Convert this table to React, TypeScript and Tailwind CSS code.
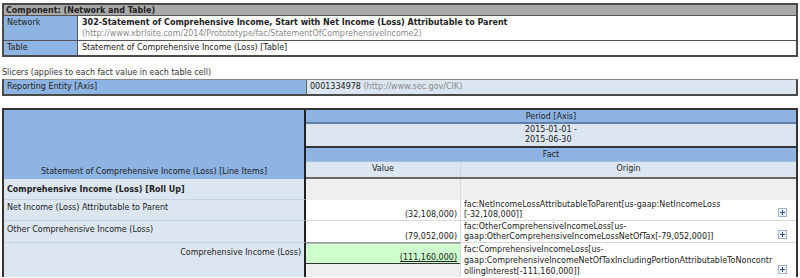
import React from "react";

function PlusBox() {
  return (
    <svg width="9" height="9" viewBox="0 0 9 9" className="shrink-0">
      <rect x="0.5" y="0.5" width="8" height="8" fill="#eef3fa" stroke="#9db3cf" />
      <path d="M2 4.5h5M4.5 2v5" stroke="#2b4f8c" strokeWidth="1" />
    </svg>
  );
}

function OriginCell({ lines, h, lh }: { lines: string[]; h: string; lh: string }) {
  return (
    <div className={`flex-1 min-w-0 flex justify-between items-end pl-[3px] pr-[9px] pb-[3px] ${h}`}>
      <div className={`self-start whitespace-nowrap ${lh}`}>
        {lines.map((l) => (
          <div key={l}>{l}</div>
        ))}
      </div>
      <PlusBox />
    </div>
  );
}

export default function App() {
  return (
    <div className="w-[800px] h-[278px] overflow-hidden bg-white text-[8px] leading-[11px] text-[#222] font-['DejaVu_Sans',sans-serif]">
      <div className="px-[2px] pt-[3px]">
        {/* Component: network and table */}
        <div className="border-2 border-[#4a4a4a]">
          <div className="h-[11px] bg-[#a9a9a9] font-bold px-[2px] leading-[11px] border-b border-[#555]">
            Component: (Network and Table)
          </div>
          <div className="flex h-[25px] border-b border-[#555]">
            <div className="w-[74px] shrink-0 bg-[#8db4e2] px-[3px] pt-[1px] border-r border-[#555]">Network</div>
            <div className="flex-1 px-[4px] pt-[1px]">
              <div className="font-bold">
                302-Statement of Comprehensive Income, Start with Net Income (Loss) Attributable to Parent
              </div>
              <div className="text-[#8a8a8a]">(http://www.xbrlsite.com/2014/Protototype/fac/StatementOfComprehensiveIncome2)</div>
            </div>
          </div>
          <div className="flex h-[14px]">
            <div className="w-[74px] shrink-0 bg-[#8db4e2] px-[3px] pt-[1px] border-r border-[#555]">Table</div>
            <div className="flex-1 px-[4px] pt-[1px]">Statement of Comprehensive Income (Loss) [Table]</div>
          </div>
        </div>

        {/* Slicers */}
        <div className="h-[22px] flex items-end pb-[1px] text-[#333]">Slicers (applies to each fact value in each table cell)</div>
        <div className="flex h-[17px] border-2 border-t border-[#4a4a4a] border-t-[#888]">
          <div className="w-[303px] shrink-0 bg-[#8db4e2] px-[3px] pt-[1px] border-r border-[#666]">Reporting Entity [Axis]</div>
          <div className="flex-1 bg-[#dce6f1] px-[3px] pt-[1px]">
            0001334978 <span className="text-[#8a8a8a]">(http://www.sec.gov/CIK)</span>
          </div>
        </div>

        {/* Fact table */}
        <div className="mt-[12px] border-2 border-[#333] border-b-0">
          <div className="flex h-[69px]">
            <div className="w-[302px] shrink-0 bg-[#8db4e2] border-r-2 border-[#222] flex items-end justify-center pb-[2px]">
              Statement of Comprehensive Income (Loss) [Line Items]
            </div>
            <div className="flex-1 flex flex-col">
              <div className="h-[14px] bg-[#8db4e2] text-center pt-[1px] border-b-2 border-[#5f7fa8]">Period [Axis]</div>
              <div className="h-[24px] bg-[#dce6f1] flex justify-center pt-[1px] leading-[10px] border-b-2 border-[#333]">
                <div>
                  <div>2015-01-01 -</div>
                  <div>2015-06-30</div>
                </div>
              </div>
              <div className="h-[14px] bg-[#8db4e2] text-center pt-[1px] border-b border-[#a8bedb]">Fact</div>
              <div className="flex-1 flex bg-[#dce6f1] border-b-2 border-[#666]">
                <div className="w-[155px] shrink-0 text-center pt-[1px] border-r border-[#c9d5e4]">Value</div>
                <div className="flex-1 text-center pt-[1px]">Origin</div>
              </div>
            </div>
          </div>

          {/* Roll up */}
          <div className="flex h-[21px]">
            <div className="w-[302px] shrink-0 bg-[#dce6f1] border-r-2 border-[#222] border-b border-b-[#c5d3e6] font-bold px-[3px] pt-[5px]">
              Comprehensive Income (Loss) [Roll Up]
            </div>
            <div className="w-[155px] shrink-0 bg-[#efefef] border-r border-[#dadada]" />
            <div className="flex-1 bg-[#efefef]" />
          </div>

          {/* Net income */}
          <div className="flex h-[21px]">
            <div className="w-[302px] shrink-0 bg-[#dce6f1] border-r-2 border-[#222] border-b border-b-[#c5d3e6] px-[3px] pt-[2px]">
              Net Income (Loss) Attributable to Parent
            </div>
            <div className="w-[155px] shrink-0 border-r border-[#dadada] border-b border-b-[#dadada] flex items-end justify-end pr-[3px] leading-[10px]">
              (32,108,000)
            </div>
            <div className="flex-1 min-w-0 flex border-b border-[#dadada]">
              <OriginCell
                h="h-[20px]"
                lh="leading-[10px]"
                lines={["fac:NetIncomeLossAttributableToParent[us-gaap:NetIncomeLoss", "[-32,108,000]]"]}
              />
            </div>
          </div>

          {/* Other comprehensive income */}
          <div className="flex h-[22px]">
            <div className="w-[302px] shrink-0 bg-[#dce6f1] border-r-2 border-[#222] border-b border-b-[#c5d3e6] px-[3px] pt-[3px]">
              Other Comprehensive Income (Loss)
            </div>
            <div className="w-[155px] shrink-0 border-r border-[#dadada] border-b border-b-[#999] flex items-end justify-end pr-[3px] leading-[10px]">
              (79,052,000)
            </div>
            <div className="flex-1 min-w-0 flex border-b border-[#dadada]">
              <OriginCell
                h="h-[21px]"
                lh="leading-[10px] pt-[1px]"
                lines={["fac:OtherComprehensiveIncomeLoss[us-", "gaap:OtherComprehensiveIncomeLossNetOfTax[-79,052,000]]"]}
              />
            </div>
          </div>

          {/* Comprehensive income total */}
          <div className="flex h-[34px]">
            <div className="w-[302px] shrink-0 bg-[#dce6f1] border-r-2 border-[#222] text-right pr-[3px] pt-[4px]">
              Comprehensive Income (Loss)
            </div>
            <div className="w-[155px] shrink-0 flex flex-col border-r border-[#dadada]">
              <div className="h-[21px] bg-[#ccffcc] border-t border-t-[#b5b5b5] border-b border-[#333] flex items-end justify-end pr-[3px] leading-[10px]">
                <span className="underline">(111,160,000)</span>
              </div>
              <div className="flex-1 bg-[#efefef]" />
            </div>
            <div className="flex-1 min-w-0 flex">
              <OriginCell
                h="h-[34px]"
                lh="leading-[11px] pt-[1px]"
                lines={[
                  "fac:ComprehensiveIncomeLoss[us-",
                  "gaap:ComprehensiveIncomeNetOfTaxIncludingPortionAttributableToNoncontr",
                  "ollingInterest[-111,160,000]]",
                ]}
              />
            </div>
          </div>
        </div>
      </div>
    </div>
  );
}
